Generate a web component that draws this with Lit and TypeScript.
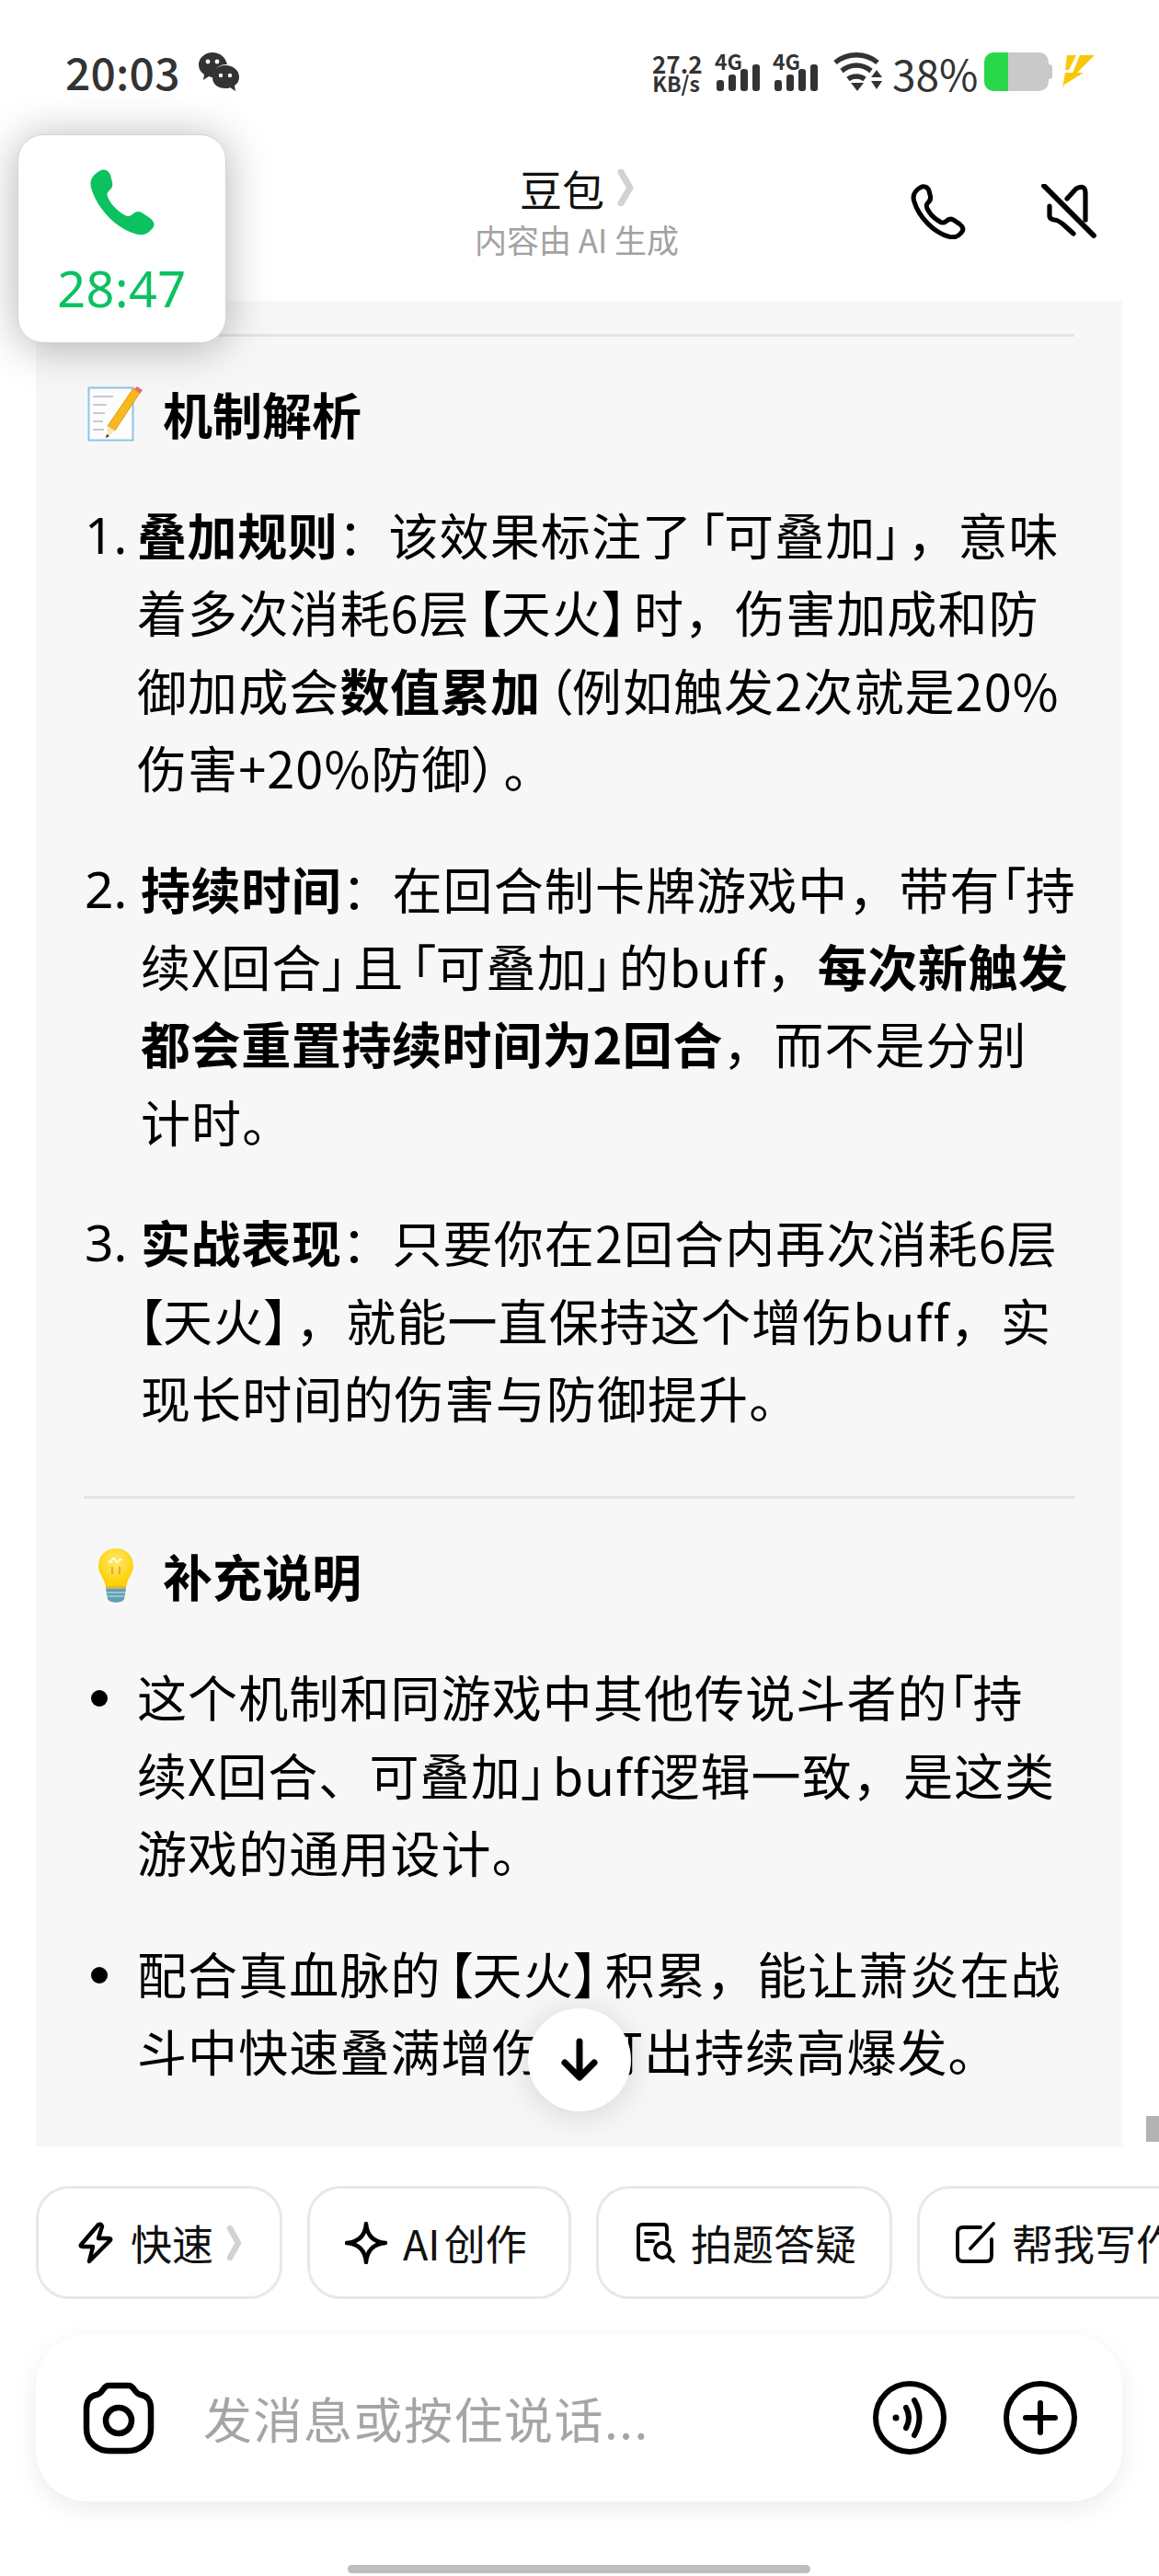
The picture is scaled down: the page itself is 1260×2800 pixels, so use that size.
import { LitElement, html, css, svg } from "lit";
import { customElement } from "lit/decorators.js";

const phonePath = "M10 2C15-1 20 1 22 6L24 14C25 19 23 21 20 24C18 26 18 28 20 32C24 40 31 46 38 50C41 52 43 51 46 49C49 46 52 45 56 47L65 53C70 57 71 61 67 65C63 70 58 72 52 71C30 66 8 44 1 20C-1 12 3 6 10 2Z";

const bars = svg`<rect x="0" y="17" width="8" height="12" rx="3"/><rect x="13" y="11" width="8" height="18" rx="3"/><rect x="26" y="5" width="8" height="24" rx="3"/><rect x="39" y="0" width="8" height="29" rx="3"/>`;

@customElement("app-root")
export class AppRoot extends LitElement {
  static styles = css`
    :host { display: block; width: 1260px; height: 2800px; overflow: hidden; position: relative; background: #fff;
      font-family: "Noto Sans CJK SC", "Noto Sans", sans-serif; color: #000; }
    .app { display: flex; flex-direction: column; height: 2800px; }
    .status { height: 146px; flex: none; box-sizing: border-box; display: flex; align-items: flex-start; padding: 54px 70px 0 71px; color: #333; }
    .time { font-size: 48px; line-height: 46px; font-weight: 500; width: 145px; letter-spacing: .2px; }
    .wechat { width: 44px; height: 44px; margin-top: 2px; }
    .status-right { margin-left: auto; display: flex; align-items: flex-start; margin-top: 3px; }
    .speed { width: 52px; margin-right: 18px; font-weight: 700; text-align: center; display: flex; flex-direction: column; }
    .speed .a { font-size: 26px; line-height: 24px; white-space: nowrap; }
    .speed .b { font-size: 23px; line-height: 19px; white-space: nowrap; }
    .sig { width: 47px; margin-right: 16px; position: relative; height: 42px; display: flex; align-items: flex-end; }
    .sig svg { width: 47px; height: 29px; fill: #333; }
    .g { position: absolute; top: -2px; left: -2px; font-size: 23px; line-height: 22px; font-weight: 700; }
    .wifi { width: 54px; height: 42px; margin-right: 11px; }
    .pct { font-size: 46px; line-height: 42px; width: 90px; margin-right: 10px; margin-top: 1px; }
    .batt { width: 70px; height: 42px; border-radius: 10px; background: linear-gradient(90deg, #28d74a 0 26px, #c9c9c9 26px); }
    .nub { width: 4px; height: 16px; background: #c9c9c9; border-radius: 0 3px 3px 0; margin-top: 13px; margin-right: 10px; }
    .bolt { width: 36px; height: 38px; margin-top: 2px; }

    .head { height: 181px; flex: none; box-sizing: border-box; display: grid; grid-template-columns: 1fr auto 1fr; padding-right: 6px; }
    .title { text-align: center; padding-top: 27px; }
    .name { font-size: 46px; line-height: 62px; display: flex; align-items: center; justify-content: center; gap: 14px; color: #111; }
    .name svg { width: 18px; height: 40px; }
    .sub { font-size: 35px; line-height: 48px; color: #a2a2a2; margin-top: 1px; }
    .head-icons { display: flex; justify-content: flex-end; align-items: flex-start; padding: 54px 62px 0 0; gap: 82px; }
    .head-icons svg { width: 60px; height: 60px; display: block; }

    .panel { height: 2006px; flex: none; box-sizing: border-box; margin: 0 40px 0 39px; background: #f7f7f7; padding: 36px 52px 0; font-size: 54px; line-height: 84.4px; letter-spacing: 1.1px; }
    hr { border: 0; height: 3px; background: #e3e3e3; margin: 0; }
    h2 { margin: 42px 0 47px; font-size: 54px; line-height: 84px; font-weight: 700; display: flex; align-items: center; letter-spacing: 0; }
    .emoji { width: 86px; height: 60px; flex: none; display: block; overflow: visible; }
    ol, ul { list-style: none; margin: 0; padding: 0; }
    li { display: flex; margin-bottom: 47px; }
    .txt { white-space: nowrap; }
    .mark { width: 58px; flex: none; padding-left: 1px; box-sizing: border-box; font-family: "Noto Sans", sans-serif; font-size: 55px; letter-spacing: 0; }
    .mark.wide { width: 62px; }
    .dot { width: 58px; flex: none; display: flex; align-items: flex-start; }
    .dot i { width: 18px; height: 18px; border-radius: 50%; background: #000; margin: 35px 0 0 8px; }
    .sep { margin-top: 65px; }
    b { font-weight: 700; letter-spacing: .6px; }
    .n { font-feature-settings: "palt"; letter-spacing: 0; }
    .o { padding-left: 7px; }
    .c { padding-right: 7px; }
    .start { margin-left: -3px; }

    .chips { display: flex; gap: 27px; margin: 43px 0 0 39px; width: 1300px; flex: none; }
    .chip { height: 123px; box-sizing: border-box; border: 3px solid #e8e8e8; border-radius: 36px; display: flex; align-items: center; font-size: 45px; white-space: nowrap; flex: none; color: #111; }
    .chip svg.ic { width: 46px; height: 46px; margin-right: 14px; flex: none; }
    .c1 { width: 268px; padding-left: 40px; }
    .c2 { width: 287px; padding-left: 38px; }
    .c3 { width: 322px; padding-left: 40px; }
    .c4 { width: 330px; padding-left: 38px; }
    .c2 svg.ic { margin-right: 17px; }
    .thin { word-spacing: -6px; }
    .shift { margin-left: 2px; }
    .chev { width: 17px; height: 38px; margin-left: 14px; }

    .input { margin: 38px 40px 0 39px; height: 182px; border-radius: 56px; background: #fff; box-shadow: 0 8px 26px rgba(0,0,0,.08); display: flex; align-items: center; padding: 0 48px 0 50px; flex: none; }
    .input .cam { width: 80px; height: 80px; margin-right: 52px; }
    .ph { font-size: 53px; color: #a5a5a5; letter-spacing: 1.5px; flex: 1; }
    .input .rnd { width: 82px; height: 82px; margin-left: 60px; }
    .input .rnd:first-of-type { margin-left: 0; }

    .home { position: absolute; left: 378px; top: 2788px; width: 503px; height: 9px; border-radius: 5px; background: #bdbdbd; }
    .thumb { position: absolute; right: 0; top: 2300px; width: 14px; height: 28px; background: #b3b3b3; }
    .call { position: absolute; left: 19px; top: 146px; width: 227px; height: 227px; box-sizing: border-box; border-radius: 28px; background: #fff; border: 1px solid #d4d4d4; box-shadow: 0 4px 48px rgba(0,0,0,.3); display: flex; flex-direction: column; align-items: center; color: #0cc160; }
    .call svg { width: 70px; height: 71px; margin-top: 37px; fill: #0cc160; }
    .call span { font: 400 54px/60px "Noto Sans", sans-serif; margin-top: 28px; letter-spacing: .5px; }
    .down { position: absolute; left: 574px; top: 2183px; width: 112px; height: 112px; border-radius: 50%; background: #fff; box-shadow: 0 4px 36px rgba(0,0,0,.14); display: flex; align-items: center; justify-content: center; }
    .down svg { width: 44px; height: 48px; }
  `;

  render() {
    const S = "stroke:#000;fill:none";
    return html`<div class="app">
      <div class="status">
        <div class="time">20:03</div>
        <svg class="wechat" viewBox="0 0 44 44"><path fill="#333" d="M15 1C7 1 0 7 0 14c0 5 2 8 6 11l-1 6 6-4c2 1 3 1 5 1-1-7 5-14 14-14h1C29 6 23 1 15 1Z"/><path fill="#333" d="M29 15c-8 0-14 5-14 13s6 12 14 12c2 0 4 0 5-1l6 4-1-6c3-2 5-5 5-9 0-8-7-13-15-13Z"/><g fill="#fff"><circle cx="10" cy="11" r="2.4"/><circle cx="20" cy="11" r="2.4"/><circle cx="24" cy="26" r="2.2"/><circle cx="34" cy="26" r="2.2"/></g></svg>
        <div class="status-right">
          <div class="speed"><span class="a">27.2</span><span class="b">KB/s</span></div>
          <div class="sig"><span class="g">4G</span><svg viewBox="0 0 47 29">${bars}</svg></div>
          <div class="sig"><span class="g">4G</span><svg viewBox="0 0 47 29">${bars}</svg></div>
          <svg class="wifi" viewBox="0 0 54 42"><g fill="none" stroke="#333" stroke-width="5.5"><path d="M3 11C16 0 36 0 49 11"/><path d="M10 20C20 12 32 12 42 20"/><path d="M17 29C22 25 30 25 35 29"/></g><path fill="#333" d="M20 33H34L27 42Z"/><path fill="#333" d="M42 27h12l-6-8ZM42 31h12l-6 9Z"/></svg>
          <div class="pct">38%</div>
          <div class="batt"></div><div class="nub"></div>
          <svg class="bolt" viewBox="0 0 36 38"><path fill="#f8c808" d="M6 1H16L8 17H4ZM20 1H36L14 23H11ZM4 20H24L3 33 1 37Z"/></svg>
        </div>
      </div>

      <div class="head">
        <div></div>
        <div class="title">
          <div class="name">豆包<svg viewBox="0 0 18 40"><path d="M4 3L14 20 4 37" fill="none" stroke="#d2d2d2" stroke-width="7" stroke-linecap="round" stroke-linejoin="round"/></svg></div>
          <div class="sub">内容由 AI 生成</div>
        </div>
        <div class="head-icons">
          <svg viewBox="-3 -3 76 77"><path d=${phonePath} style=${S} stroke-width="6.5" stroke-linejoin="round"/></svg>
          <svg viewBox="0 0 60 60" style=${S} stroke-width="5.2" stroke-linecap="round" stroke-linejoin="round"><path d="M3 2L57 56" stroke-width="5.8"/><path d="M28 16L38 5Q48 0 48 10V39"/><path d="M9 24V35Q9 38 14 39Q18 39 24 44L35 54"/></svg>
        </div>
      </div>

      <div class="panel">
        <hr />
        <h2>
          <svg class="emoji" viewBox="0 0 86 60"><g transform="translate(4 0)"><rect x="1.5" y="1.5" width="48" height="57" fill="#fdfdfd" stroke="#8cc4e6" stroke-width="2"/><g stroke="#b5b9c4" stroke-width="1.5" fill="none"><path d="M6 11h22M6 20h15M6 29h13M6 38h11M6 47h12"/></g><path d="M50 2L57 7 30 48 22 43Z" fill="#f7b91d" stroke="#d98c10" stroke-width=".8"/><path d="M50 2L56 7 59 3 53 -1Z" fill="#ec6b70" transform="translate(1 1)"/><path d="M22 43L30 48 21 56Z" fill="#f6e6b8"/><path d="M21 52L24 54 20 56Z" fill="#333"/></g></svg>
          <span>机制解析</span>
        </h2>
        <ol>
          <li><span class="mark">1.</span><span class="txt"><b>叠加规则</b>：该效果标注了<span class="n o">「</span>可叠加<span class="n c">」</span>，意味<br />着多次消耗6层<span class="n o">【</span>天火<span class="n c">】</span>时，伤害加成和防<br />御加成会<b>数值累加</b><span class="n o">（</span>例如触发2次就是20%<br />伤害+20%防御<span class="n c">）</span>。</span></li>
          <li><span class="mark wide">2.</span><span class="txt"><b>持续时间</b>：在回合制卡牌游戏中，带有<span class="n">「</span>持<br />续X回合<span class="n c">」</span>且<span class="n o">「</span>可叠加<span class="n c">」</span>的buff，<b>每次新触发<br />都会重置持续时间为2回合</b>，而不是分别<br />计时。</span></li>
          <li><span class="mark wide">3.</span><span class="txt"><b>实战表现</b>：只要你在2回合内再次消耗6层<br /><span class="n start">【</span>天火<span class="n c">】</span>，就能一直保持这个增伤buff，实<br />现长时间的伤害与防御提升。</span></li>
        </ol>
        <hr class="sep" />
        <h2>
          <svg class="emoji" viewBox="0 0 86 60"><defs><radialGradient id="bg" cx=".5" cy=".35" r=".6"><stop offset="0" stop-color="#ffe970"/><stop offset="1" stop-color="#fdd000"/></radialGradient></defs><path d="M35 0C23 0 16 9 16 19c0 9 7 14 8 23H46c1-9 8-14 8-23C54 9 47 0 35 0Z" fill="url(#bg)"/><path d="M31 28V20M39 28V20" stroke="#c98a2a" stroke-width="1.2" fill="none"/><path d="M28 17c1 3 3 3 3 0s3-3 4 0 3 3 4 0 3 0 3 0" stroke="#fff" fill="none" stroke-width="1.4" transform="translate(-.5 -4)"/><rect x="24" y="41" width="22" height="4" fill="#d8b84a"/><path d="M24 44H46L44 55C42 60 28 60 26 55Z" fill="#5f9fb4"/><path d="M25 48H45M26 52H44" stroke="#a9cfd9" stroke-width="1.4"/></svg>
          <span>补充说明</span>
        </h2>
        <ul>
          <li><span class="dot"><i></i></span><span class="txt">这个机制和同游戏中其他传说斗者的<span class="n">「</span>持<br />续X回合、可叠加<span class="n c">」</span>buff逻辑一致，是这类<br />游戏的通用设计。</span></li>
          <li><span class="dot"><i></i></span><span class="txt">配合真血脉的<span class="n o">【</span>天火<span class="n c">】</span>积累，能让萧炎在战<br />斗中快速叠满增伤，打出持续高爆发。</span></li>
        </ul>
      </div>

      <div class="chips">
        <div class="chip c1"><svg class="ic" viewBox="0 0 46 46" style=${S} stroke-width="4.4" stroke-linejoin="round" stroke-linecap="round"><path d="M25 3L6 25Q5 27 8 27H19L15 43L38 20Q39 18 36 18H25L29 5Q28 2 25 3Z"/></svg>快速<svg class="chev" viewBox="0 0 17 38"><path d="M4 3L13 19 4 35" fill="none" stroke="#d2d2d2" stroke-width="6.5" stroke-linecap="round" stroke-linejoin="round"/></svg></div>
        <div class="chip c2"><svg class="ic" viewBox="0 0 46 46" style=${S} stroke-width="4.4" stroke-linejoin="round"><path d="M23 2C24 15 31 22 44 23 31 24 24 31 23 44 22 31 15 24 2 23 15 22 22 15 23 2Z"/></svg><span class="thin">AI 创作</span></div>
        <div class="chip c3"><svg class="ic" viewBox="0 0 46 46" style=${S} stroke-width="3.8" stroke-linecap="round"><path d="M14 41H7Q3 41 3 37V7Q3 3 7 3H30Q34 3 34 7V19"/><path d="M11 13H24M11 21H19"/><circle cx="29" cy="31" r="8"/><path d="M35 37L41 43"/></svg>拍题答疑</div>
        <div class="chip c4"><svg class="ic" viewBox="0 0 46 46" style=${S} stroke-width="3.8" stroke-linecap="round"><path d="M28 6H9Q3 6 3 12V37Q3 43 9 43H34Q40 43 40 37V19"/><path d="M17 29L42 2"/></svg><span class="shift">帮我写作</span></div>
      </div>

      <div class="input">
        <svg class="cam" viewBox="0 0 80 80" style=${S} stroke-width="6.5" stroke-linejoin="round"><path d="M29 5H51C57 5 57 14 64 15 71 16 75 22 75 30V52C75 68 62 76 50 76H30C18 76 5 68 5 52V30C5 22 9 16 16 15 23 14 23 5 29 5Z"/><circle cx="40" cy="43" r="14"/></svg>
        <div class="ph">发消息或按住说话...</div>
        <svg class="rnd" viewBox="0 0 82 82" style=${S} stroke-width="6" stroke-linecap="round"><circle cx="41" cy="41" r="37"/><circle cx="26" cy="41" r="3.5" style="fill:#000;stroke:none"/><path d="M37 30Q43 41 37 52"/><path d="M46 22Q57 41 46 60"/></svg>
        <svg class="rnd" viewBox="0 0 82 82" style=${S} stroke-width="6" stroke-linecap="round"><circle cx="41" cy="41" r="37"/><path d="M41 25V57M25 41H57"/></svg>
      </div>
    </div>
    <div class="thumb"></div>
    <div class="call"><svg viewBox="0 0 70 71"><path d=${phonePath}/></svg><span>28:47</span></div>
    <div class="down"><svg viewBox="0 0 44 48" style=${S} stroke-width="7" stroke-linecap="round" stroke-linejoin="round"><path d="M22 4V42M6 27L22 43 38 27"/></svg></div>
    <div class="home"></div>`;
  }
}
